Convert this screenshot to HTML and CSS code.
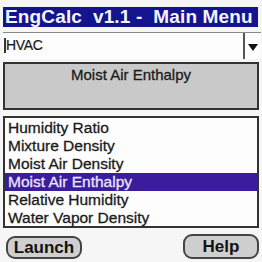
FILE: index.html
```html
<!DOCTYPE html>
<html>
<head>
<meta charset="utf-8">
<link rel="stylesheet" href="styles.css">
</head>
<body>
<div class="screen">
  <div class="title">EngCalc  v1.1 -  Main Menu</div>
  <div class="dropdown">
    <span class="dd-text">HVAC</span>
    <span class="dd-arrow"><svg width="10" height="8" viewBox="0 0 10 8"><polygon points="0,0 10,0 5,7" fill="#111"/></svg></span>
  </div>
  <div class="desc">Moist Air Enthalpy</div>
  <ul class="list">
    <li>Humidity Ratio</li>
    <li>Mixture Density</li>
    <li>Moist Air Density</li>
    <li class="sel">Moist Air Enthalpy</li>
    <li>Relative Humidity</li>
    <li>Water Vapor Density</li>
  </ul>
  <div class="buttons">
    <button class="btn launch">Launch</button>
    <button class="btn help">Help</button>
  </div>
</div>
</body>
</html>
```

FILE: styles.css
```css
html, body {
  margin: 0;
  padding: 0;
  background: #f6f6f6;
}
.screen {
  width: 262px;
  height: 262px;
  padding: 7px 3px 0 3px;
  box-sizing: border-box;
  font-family: "Liberation Sans", Arial, sans-serif;
  color: #1a1a1a;
  display: flex;
  flex-direction: column;
}
.title {
  height: 20px;
  background: #14148e;
  color: #f4f4ff;
  font-weight: bold;
  font-size: 19px;
  letter-spacing: 0.15px;
  line-height: 20px;
  white-space: pre;
  padding-left: 2px;
  margin-right: 1px;
  overflow: hidden;
}
.dropdown {
  margin-top: 5px;
  height: 26px;
  background: #fdfdfd;
  border-top: 1px solid #8a8a8a;
  display: flex;
  align-items: stretch;
  margin-right: -2px;
}
.dd-text {
  flex: 1;
  border-left: 2px solid #333;
  margin: 5px 0 6px 1px;
  font-size: 14px;
  line-height: 14px;
  letter-spacing: -0.3px;
  -webkit-text-stroke: 0.2px #1a1a1a;
}
.dd-arrow {
  width: 18px;
  border-left: 2px solid #555;
  display: flex;
  justify-content: center;
  padding-top: 11px;
  box-sizing: border-box;
}
.desc {
  margin-top: 3px;
  height: 48px;
  box-sizing: border-box;
  border: 2px solid #333;
  background: #c9c9c9;
  text-align: center;
  font-size: 15px;
  padding-top: 3px;
  line-height: 16px;
  -webkit-text-stroke: 0.3px #1a1a1a;
}
.list {
  list-style: none;
  margin: 6px 0 0 0;
  padding: 1px 0 0 0;
  height: 112px;
  box-sizing: border-box;
  border: 2px solid #333;
  background: #fdfdfd;
}
.list li {
  height: 18px;
  line-height: 18px;
  font-size: 15.5px;
  padding-left: 3px;
  -webkit-text-stroke: 0.3px #1a1a1a;
}
.list li.sel {
  background: #3a1c9c;
  color: #ece6ff;
  -webkit-text-stroke: 0.3px #ece6ff;
}
.buttons {
  display: flex;
  justify-content: space-between;
  align-items: flex-end;
  margin-top: 6px;
}
.btn {
  font-family: "Liberation Sans", Arial, sans-serif;
  font-weight: bold;
  font-size: 17px;
  color: #111;
  background: #cfcfcf;
  border: 2px solid #444;
  border-radius: 9px;
  padding: 0;
  height: 23px;
  line-height: 19px;
}
.launch {
  width: 76px;
  margin-left: 3px;
}
.help {
  width: 76px;
  height: 25px;
}
```
